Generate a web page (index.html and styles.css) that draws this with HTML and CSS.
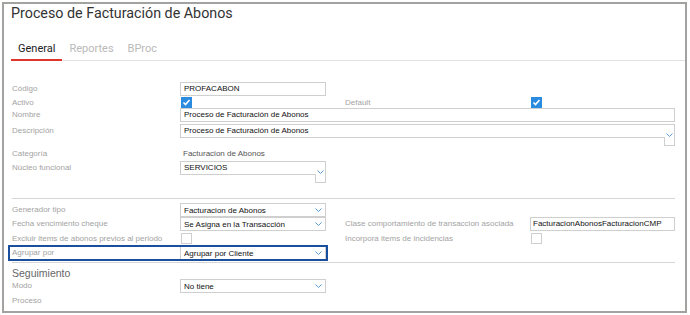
FILE: index.html
```html
<!DOCTYPE html>
<html lang="es">
<head>
<meta charset="utf-8">
<title>Proceso de Facturación de Abonos</title>
<link rel="stylesheet" href="styles.css">
</head>
<body>
<div class="frame">
  <h1 class="title">Proceso de Facturación de Abonos</h1>
  <div class="tabs">
    <div class="tab active">General</div>
    <div class="tab">Reportes</div>
    <div class="tab">BProc</div>
  </div>
  <div class="form">
    <div class="row r-codigo">
      <div class="label">Código</div>
      <div class="input w-left">PROFACABON</div>
    </div>
    <div class="row r-check">
      <div class="label">Activo</div>
      <div class="field"><span class="cb checked"><svg viewBox="0 0 11 11" width="11" height="11"><polyline points="2.5,5.5 4.5,7.5 8.5,3" fill="none" stroke="#fff" stroke-width="1.6"/></svg></span></div>
      <div class="spacer"></div>
      <div class="label label2">Default</div>
      <div class="field"><span class="cb checked"><svg viewBox="0 0 11 11" width="11" height="11"><polyline points="2.5,5.5 4.5,7.5 8.5,3" fill="none" stroke="#fff" stroke-width="1.6"/></svg></span></div>
    </div>
    <div class="row r-nombre">
      <div class="label">Nombre</div>
      <div class="input w-full">Proceso de Facturación de Abonos</div>
    </div>
    <div class="row r-combo">
      <div class="label">Descripción</div>
      <div class="combo w-full">
        <div class="combo-text">Proceso de Facturación de Abonos</div>
        <div class="combo-btn"><svg class="chev" viewBox="0 0 7 4" width="7" height="4"><polyline points="0.5,0.5 3.5,3.5 6.5,0.5" fill="none" stroke="#5b9bd8" stroke-width="1"/></svg></div>
      </div>
    </div>
    <div class="row r-cat">
      <div class="label">Categoría</div>
      <div class="value">Facturacion de Abonos</div>
    </div>
    <div class="row r-combo">
      <div class="label">Núcleo funcional</div>
      <div class="combo w-left">
        <div class="combo-text">SERVICIOS</div>
        <div class="combo-btn"><svg class="chev" viewBox="0 0 7 4" width="7" height="4"><polyline points="0.5,0.5 3.5,3.5 6.5,0.5" fill="none" stroke="#5b9bd8" stroke-width="1"/></svg></div>
      </div>
    </div>
    <div class="sep sep1"></div>
    <div class="row r-gen">
      <div class="label">Generador tipo</div>
      <div class="select w-left"><span>Facturacion de Abonos</span><svg viewBox="0 0 7 4" width="7" height="4"><polyline points="0.5,0.5 3.5,3.5 6.5,0.5" fill="none" stroke="#5b9bd8" stroke-width="1"/></svg></div>
    </div>
    <div class="row r-fecha">
      <div class="label">Fecha vencimiento cheque</div>
      <div class="select w-left"><span>Se Asigna en la Transacción</span><svg viewBox="0 0 7 4" width="7" height="4"><polyline points="0.5,0.5 3.5,3.5 6.5,0.5" fill="none" stroke="#5b9bd8" stroke-width="1"/></svg></div>
      <div class="spacer"></div>
      <div class="label label2">Clase comportamiento de transaccion asociada</div>
      <div class="input w-right">FacturacionAbonosFacturacionCMP</div>
    </div>
    <div class="row r-check2">
      <div class="label">Excluir items de abonos previos al periodo</div>
      <div class="field"><span class="cb"></span></div>
      <div class="spacer"></div>
      <div class="label label2">Incorpora items de incidencias</div>
      <div class="field"><span class="cb"></span></div>
    </div>
    <div class="row r-hl">
      <div class="label">Agrupar por</div>
      <div class="select w-left"><span>Agrupar por Cliente</span><svg viewBox="0 0 7 4" width="7" height="4"><polyline points="0.5,0.5 3.5,3.5 6.5,0.5" fill="none" stroke="#5b9bd8" stroke-width="1"/></svg></div>
    </div>
    <div class="sep sep2"></div>
    <h2 class="section">Seguimiento</h2>
    <div class="row r-modo">
      <div class="label">Modo</div>
      <div class="select w-left"><span>No tiene</span><svg viewBox="0 0 7 4" width="7" height="4"><polyline points="0.5,0.5 3.5,3.5 6.5,0.5" fill="none" stroke="#5b9bd8" stroke-width="1"/></svg></div>
    </div>
    <div class="row r-proceso">
      <div class="label">Proceso</div>
    </div>
  </div>
</div>
</body>
</html>
```

FILE: styles.css
```css
* { box-sizing: border-box; }
html, body { margin: 0; padding: 0; background: #fff; }
body { font-family: "Liberation Sans", Arial, sans-serif; }

.frame {
  margin: 2px 0 0 2px;
  width: 685px;
  height: 311px;
  border: 2px solid #a2a2a0;
  overflow: hidden;
  background: #fff;
}

.title {
  margin: 1px 0 0 7px;
  font-family: Roboto, "Liberation Sans", sans-serif;
  font-weight: 400;
  font-size: 14.3px;
  line-height: 16px;
  color: #333;
}

.tabs {
  display: flex;
  margin: 20px 0 0 7px;
  border-bottom: 1px solid #e2e2e2;
  height: 20px;
}
.tab {
  font-family: Roboto, "Liberation Sans", sans-serif;
  font-size: 11px;
  line-height: 14px;
  padding: 1px 7px 3px;
  color: #b9b9b9;
  height: 20px;
}
.tab.active {
  color: #222;
  border-bottom: 2px solid #e0352b;
}

.form {
  margin-top: 21px;
  padding-left: 8px;
  width: 671px;
}

.row {
  display: flex;
  align-items: flex-start;
  font-size: 8px;
}
.label {
  width: 168px;
  flex: none;
  color: #a3a3a3;
  line-height: 14px;
  white-space: nowrap;
}
.label2 { width: 185px; }
.spacer { width: 19px; flex: none; }
.field { width: 146px; flex: none; }

.w-left { width: 146px; }
.w-right { width: 145px; }
.w-full { width: 495px; }

.input {
  flex: none;
  height: 14px;
  border: 1px solid #cfcfcf;
  padding-left: 3px;
  line-height: 12px;
  color: #111;
  white-space: nowrap;
  overflow: hidden;
}
.w-right.input { padding-left: 2px; }

.value { color: #555; line-height: 14px; padding-left: 3px; }

.select {
  flex: none;
  height: 14px;
  border: 1px solid #cfcfcf;
  padding: 0 3px 0 3px;
  display: flex;
  align-items: center;
  justify-content: space-between;
  color: #111;
  white-space: nowrap;
}
.select svg { display: block; }

.combo {
  flex: none;
  display: flex;
  align-items: flex-start;
  height: 22px;
}
.combo-text {
  flex: 1;
  height: 14px;
  border: 1px solid #cfcfcf;
  border-right: none;
  padding-left: 3px;
  line-height: 12px;
  color: #111;
  white-space: nowrap;
}
.combo-btn {
  position: relative;
  width: 11px;
  height: 22px;
  border: 1px solid #cfcfcf;
  border-left: none;
}
.combo-btn::before {
  content: "";
  position: absolute;
  left: 0;
  top: 12px;
  bottom: -1px;
  border-left: 1px solid #cfcfcf;
}
.chev { position: absolute; left: 2px; top: 8px; display: block; }

.cb {
  display: block;
  width: 11px;
  height: 11px;
  border: 1px solid #cfcfcf;
  background: #fff;
  margin-left: 1px;
}
.cb.checked {
  border: none;
  background: #2a8be0;
}
.cb svg { display: block; }

.r-codigo { height: 15px; }
.r-check { height: 11px; }
.r-check .label { line-height: 12px; }
.r-nombre { height: 16px; }
.r-combo { height: 23px; }
.r-cat { height: 14px; }
.r-gen { height: 14px; margin-top: 4px; }
.r-fecha { height: 16px; }
.r-check2 { height: 12px; }
.r-check2 .label { line-height: 11px; }
.r-hl {
  height: 14px;
  margin-top: 1px;
  margin-left: -3px;
  padding-left: 3px;
  width: 318px;
  outline: 2px solid #1a4f9e;
  outline-offset: -1px;
}
.r-modo { height: 15px; }
.r-proceso { height: 14px; }

.sep {
  height: 1px;
  background: #d6d6d6;
  width: 663px;
}
.sep1 { margin-top: 14px; }
.sep2 { margin-top: 2px; }

.section {
  margin: 4px 0 0 0;
  font-size: 10.5px;
  font-weight: 400;
  line-height: 12px;
  color: #666;
}
```
